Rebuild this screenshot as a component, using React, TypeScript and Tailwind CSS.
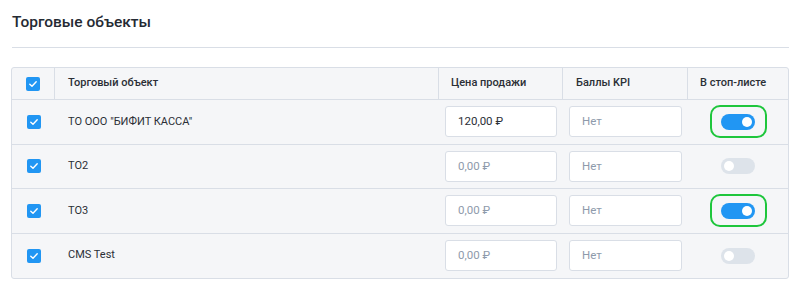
import React from "react";

type Row = { name: string; price: string; priceFilled: boolean; stop: boolean; outlined: boolean };

const rows: Row[] = [
  { name: 'ТО ООО "БИФИТ КАССА"', price: "120,00 ₽", priceFilled: true, stop: true, outlined: true },
  { name: "ТО2", price: "0,00 ₽", priceFilled: false, stop: false, outlined: false },
  { name: "ТО3", price: "0,00 ₽", priceFilled: false, stop: true, outlined: true },
  { name: "CMS Test", price: "0,00 ₽", priceFilled: false, stop: false, outlined: false },
];

function Check() {
  return (
    <div className="w-[14px] h-[14px] rounded-[2px] bg-[#2196f3] flex items-center justify-center">
      <svg width="10" height="10" viewBox="0 0 10 10" fill="none">
        <path d="M1.8 5.2 L4 7.3 L8.2 2.8" stroke="white" strokeWidth="1.4" strokeLinecap="round" strokeLinejoin="round" />
      </svg>
    </div>
  );
}

function Toggle({ on }: { on: boolean }) {
  return (
    <div
      className={
        on
          ? "w-[34px] h-[16px] rounded-full bg-[#2196f3] flex items-center justify-end px-[3px]"
          : "w-[34px] h-[16px] rounded-full bg-[#dde3ea] flex items-center justify-start px-[3px]"
      }
    >
      <div className="w-[10px] h-[10px] rounded-full bg-white" />
    </div>
  );
}

function Input({ text, filled }: { text: string; filled: boolean }) {
  return (
    <div className="mx-[6px] h-[31px] bg-white border border-[#d9dee6] rounded-[3px] flex items-center pl-3">
      <span className={filled ? "text-[11.5px] text-[#2b2f36]" : "text-[11.5px] text-[#8e9aab]"}>{text}</span>
    </div>
  );
}

export default function App() {
  return (
    <div className="w-[800px] h-[287px] bg-white px-[11px]" style={{ fontFamily: "Roboto, 'Liberation Sans', sans-serif" }}>
      <div className="h-[48px] border-b border-[#d9dee6] ml-px pt-3">
        <div className="text-[15.5px] leading-5 font-medium text-[#252a33]">Торговые объекты</div>
      </div>
      <div className="mt-[19px] border border-[#d9dee6] rounded-[3px] bg-[#f5f6f8] text-[#2b2f36]">
        <div className="grid grid-cols-[43px_384px_124px_125px_1fr] h-[32px] border-b border-[#d9dee6] text-[11px] font-medium">
          <div className="border-r border-[#d9dee6] flex items-center justify-center">
            <Check />
          </div>
          <div className="border-r border-[#d9dee6] flex items-center pl-[13px]">Торговый объект</div>
          <div className="border-r border-[#d9dee6] flex items-center pl-3">Цена продажи</div>
          <div className="border-r border-[#d9dee6] flex items-center pl-[13px]">Баллы KPI</div>
          <div className="flex items-center pl-3">В стоп-листе</div>
        </div>
        {rows.map((r, i) => (
          <div
            key={i}
            className={
              i < rows.length - 1
                ? "grid grid-cols-[43px_384px_124px_125px_1fr] h-[44.5px] border-b border-[#d9dee6] items-center text-[11px]"
                : "grid grid-cols-[43px_384px_124px_125px_1fr] h-[44px] items-center text-[11px]"
            }
          >
            <div className="flex items-center justify-center">
              <Check />
            </div>
            <div className="pl-[13px]">{r.name}</div>
            <Input text={r.price} filled={r.priceFilled} />
            <Input text="Нет" filled={false} />
            <div className="flex items-center justify-center">
              <div
                className={
                  r.outlined
                    ? "w-[57px] h-[33px] rounded-[10px] border-2 border-[#1ec63c] flex items-center justify-center"
                    : "w-[57px] h-[33px] flex items-center justify-center"
                }
              >
                <Toggle on={r.stop} />
              </div>
            </div>
          </div>
        ))}
      </div>
    </div>
  );
}
